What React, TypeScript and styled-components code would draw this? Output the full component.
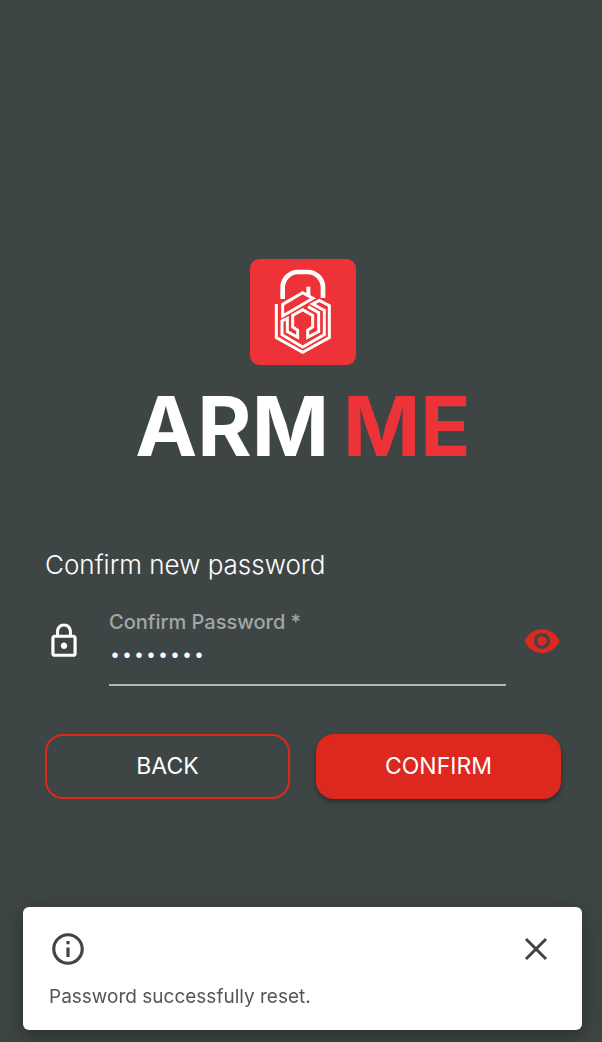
import React, { useState } from "react";
import styled, { createGlobalStyle } from "styled-components";

const GlobalStyle = createGlobalStyle`
  * { box-sizing: border-box; }
  body {
    margin: 0;
    background: #3e4645;
    color: #fff;
    font-family: Inter, "Liberation Sans", sans-serif;
  }
  button, input { font: inherit; color: inherit; }
`;

const Page = styled.main`
  min-height: 100vh;
  display: flex;
  flex-direction: column;
  padding: 259px 41px 160px 45px;
`;

const Brand = styled.header`
  display: flex;
  flex-direction: column;
  align-items: center;
  gap: 20px;
`;

const Badge = styled.svg`
  width: 106px;
  height: 106px;
  display: block;
`;

const Wordmark = styled.h1`
  margin: 0;
  display: flex;
  gap: 14px;
  font-size: 83px;
  line-height: 82px;
  font-weight: 700;
`;

const WordmarkAccent = styled.span`
  color: #ee3338;
`;

const Form = styled.form`
  display: flex;
  flex-direction: column;
  margin-top: 82px;
`;

const Heading = styled.h2`
  margin: 0;
  font-size: 26px;
  line-height: 32px;
  font-weight: 300;
  color: #fff;
`;

const FieldRow = styled.div`
  display: flex;
  align-items: flex-start;
  margin-top: 27px;
`;

const FieldIcon = styled.svg`
  width: 38px;
  height: 38px;
  flex: none;
  display: block;
`;

const LockSlot = styled.span`
  flex: none;
  margin-top: 14px;
`;

const Field = styled.div`
  flex: 1;
  min-width: 0;
  display: flex;
  flex-direction: column;
  margin: 0 17px 0 26px;
  border-bottom: 2px solid #b3b6b6;
`;

const Label = styled.label`
  font-size: 20px;
  line-height: 28px;
  font-weight: 500;
  color: #a2a6a5;
`;

const PasswordInput = styled.input`
  width: 100%;
  height: 48px;
  padding: 0 0 8px;
  border: 0;
  outline: 0;
  background: transparent;
  font-family: "Liberation Mono", monospace;
  font-size: 20px;
`;

const IconButton = styled.button`
  flex: none;
  display: flex;
  padding: 0;
  border: 0;
  background: none;
  cursor: pointer;
`;

const RevealButton = styled(IconButton)`
  margin-top: 14px;
`;

const Actions = styled.div`
  display: grid;
  grid-template-columns: 1fr 1fr;
  gap: 26px;
  margin-top: 48px;
`;

const Button = styled.button<{ $filled?: boolean }>`
  height: 65px;
  padding: 0 0 2px;
  border-radius: 18px;
  border: 2px solid #dc281e;
  background: ${(p) => (p.$filled ? "#dc281e" : "transparent")};
  box-shadow: ${(p) => (p.$filled ? "0 3px 5px rgba(0, 0, 0, 0.35)" : "none")};
  font-size: 23px;
  line-height: 28px;
  cursor: pointer;
`;

const Toast = styled.div`
  position: fixed;
  left: 23px;
  right: 20px;
  bottom: 12px;
  padding: 23px 26px 19px;
  border-radius: 6px;
  background: #fff;
  color: #555;
  box-shadow: 0 6px 20px rgba(0, 0, 0, 0.35);
`;

const ToastBar = styled.div`
  display: flex;
  justify-content: space-between;
  align-items: center;
  color: #434343;
`;

const ToastText = styled.p`
  margin: 15px 0 0;
  font-size: 19px;
  line-height: 28px;
`;

export default function App() {
  const [visible, setVisible] = useState(false);
  const [password, setPassword] = useState("password");
  const [toast, setToast] = useState(true);

  return (
    <>
      <GlobalStyle />
      <Page>
        <Brand>
          <Badge viewBox="29 27 318 318" aria-hidden="true">
            <rect x="29" y="27" width="318" height="318" rx="29" fill="#ee3338" />
            <g fill="none" stroke="#fff">
              <path strokeWidth="14" d="M127 147V112A46 46 0 0 1 173 66H202A46 46 0 0 1 248 112V144" />
              <path strokeWidth="9" d="M127 163L187 128L218 145L127 198Z" />
              <path strokeWidth="12" d="M204 110V140" />
              <path strokeWidth="9" d="M108 162V263L187 307L267 263V167L237 151L217 162L252 181V254L187 291L125 254V213L141 205V245L172 262V241L157 231V196L187 179L217 196V231L202 241V262L235 245V188L203 170" />
            </g>
          </Badge>
          <Wordmark>
            <span>ARM</span>
            <WordmarkAccent>ME</WordmarkAccent>
          </Wordmark>
        </Brand>

        <Form onSubmit={(e) => e.preventDefault()}>
          <Heading>Confirm new password</Heading>
          <FieldRow>
            <LockSlot>
              <FieldIcon viewBox="0 0 24 24" fill="#fff" aria-hidden="true">
                <path d="M12 17c1.100 0 2-.9 2-2s-.9-2-2-2-2 .9-2 2 .9 2 2 2zm6-9h-1V6c0-2.760-2.240-5-5-5S7 3.240 7 6v2H6c-1.100 0-2 .9-2 2v10c0 1.100.9 2 2 2h12c1.100 0 2-.9 2-2V10c0-1.100-.9-2-2-2zM8.900 6c0-1.710 1.390-3.100 3.100-3.100s3.100 1.390 3.100 3.100v2H8.900V6zM18 20H6V10h12v10z" />
              </FieldIcon>
            </LockSlot>
            <Field>
              <Label htmlFor="confirm">Confirm Password *</Label>
              <PasswordInput
                id="confirm"
                type={visible ? "text" : "password"}
                value={password}
                onChange={(e) => setPassword(e.target.value)}
              />
            </Field>
            <RevealButton type="button" aria-label="Show password" onClick={() => setVisible(!visible)}>
              <FieldIcon viewBox="0 0 24 24" fill="#dc281e">
                <path d="M12 4.500C7 4.500 2.730 7.610 1 12c1.730 4.390 6 7.500 11 7.500s9.270-3.110 11-7.500c-1.730-4.390-6-7.500-11-7.500zM12 17c-2.760 0-5-2.240-5-5s2.240-5 5-5 5 2.240 5 5-2.240 5-5 5zm0-8c-1.660 0-3 1.340-3 3s1.340 3 3 3 3-1.340 3-3-1.340-3-3-3z" />
              </FieldIcon>
            </RevealButton>
          </FieldRow>
          <Actions>
            <Button type="button">BACK</Button>
            <Button type="submit" $filled>CONFIRM</Button>
          </Actions>
        </Form>
      </Page>

      {toast && (
        <Toast role="status">
          <ToastBar>
            <svg width="38" height="38" viewBox="0 0 24 24" fill="currentColor" aria-hidden="true">
              <path d="M11 7h2v2h-2zm0 4h2v6h-2zm1-9C6.480 2 2 6.480 2 12s4.480 10 10 10 10-4.480 10-10S17.520 2 12 2zm0 18c-4.410 0-8-3.590-8-8s3.590-8 8-8 8 3.590 8 8-3.590 8-8 8z" />
            </svg>
            <IconButton type="button" aria-label="Close" onClick={() => setToast(false)}>
              <svg width="38" height="38" viewBox="0 0 38 38" fill="none" stroke="currentColor" strokeWidth="3">
                <path d="M8 9L28 29M28 9L8 29" />
              </svg>
            </IconButton>
          </ToastBar>
          <ToastText>Password successfully reset.</ToastText>
        </Toast>
      )}
    </>
  );
}
